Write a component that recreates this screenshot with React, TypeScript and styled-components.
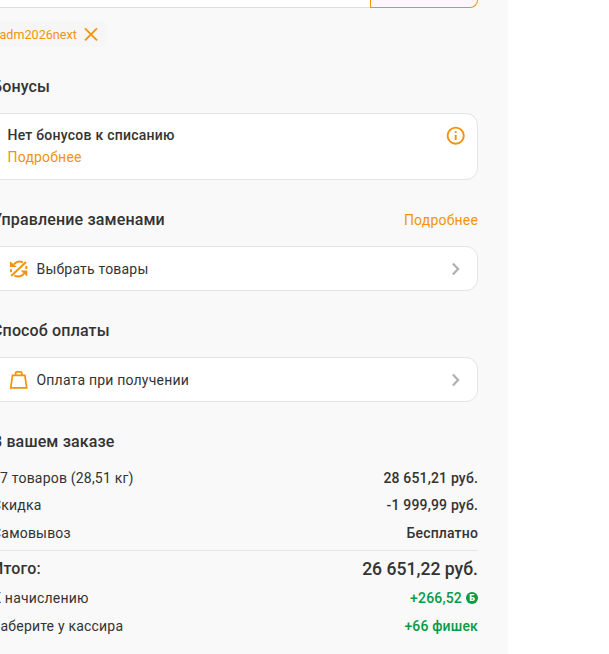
import React from "react";
import styled, { createGlobalStyle } from "styled-components";

const GlobalStyle = createGlobalStyle`
  * { box-sizing: border-box; }
  html, body { margin: 0; background: #fff; overflow: hidden; }
  body { font-family: Roboto, "Liberation Sans", sans-serif; font-size: 14px; color: #333; letter-spacing: 0.2px; }
`;

const orange = "#f2930d";
const line = "#e4e4e4";

const Viewport = styled.div`
  width: 609px;
  height: 654px;
  overflow: hidden;
`;

const Panel = styled.main`
  width: 516px;
  height: 654px;
  margin-left: -8px;
  padding-right: 30px;
  background: #f9f9f9;
`;

const PromoField = styled.div`
  display: flex;
  height: 8px;
`;

const PromoInput = styled.div`
  flex: 1;
  background: #fff;
  border-bottom: 1px solid #dedede;
`;

const PromoButton = styled.div`
  width: 108px;
  background: #faf8f9;
  border: 1.5px solid ${orange};
  border-top: 0;
  border-radius: 0 0 8px 0;
`;

const Chip = styled.div`
  display: flex;
  align-items: center;
  gap: 7px;
  width: 114px;
  height: 26px;
  margin-top: 13px;
  padding-left: 7.5px;
  background: #f6f6f6;
  border-radius: 6px;
  color: ${orange};
  font-size: 12.6px;
  letter-spacing: 0;
`;

const SectionHead = styled.div<{ $top: number }>`
  display: flex;
  justify-content: space-between;
  align-items: center;
  height: 24px;
  margin-top: ${(p) => p.$top}px;
`;

const Heading = styled.h2`
  margin: 0;
  font-size: 16px;
  line-height: 24px;
  font-weight: 500;
  letter-spacing: 0.15px;
`;

const Link = styled.span`
  color: ${orange};
  line-height: 22px;
`;

const Card = styled.div<{ $tall?: boolean }>`
  display: flex;
  align-items: ${(p) => (p.$tall ? "flex-start" : "center")};
  height: ${(p) => (p.$tall ? 67 : 45)}px;
  margin-top: 14px;
  padding: ${(p) => (p.$tall ? "10px 11px 0 14.5px" : "0 11.5px 0 15px")};
  background: #fff;
  border: 1px solid ${line};
  border-radius: 8px 12px 12px 8px;
`;

const BonusText = styled.div`
  display: flex;
  flex: 1;
  flex-direction: column;
  line-height: 22px;
`;

const Strong = styled.span`
  font-weight: 500;
  letter-spacing: 0.24px;
`;

const OptionLabel = styled.span`
  flex: 1;
  margin-left: 6.5px;
`;

const Summary = styled.div`
  margin-top: 10px;
`;

const Row = styled.div<{ $height: number }>`
  display: flex;
  align-items: center;
  justify-content: space-between;
  height: ${(p) => p.$height}px;
`;

const Divider = styled.div`
  height: 1px;
  margin-top: 3px;
  margin-bottom: 3px;
  background: ${line};
`;

const Value = styled.span<{ $green?: boolean; $large?: boolean }>`
  display: flex;
  align-items: center;
  gap: 4px;
  font-weight: 500;
  font-size: ${(p) => (p.$large ? 17.6 : 14)}px;
  letter-spacing: ${(p) => (p.$large ? 0 : 0.17)}px;
  color: ${(p) => (p.$green ? "#069b45" : "#333")};
`;

const Coin = styled.span`
  width: 12px;
  height: 12px;
  border-radius: 50%;
  background: #069b45;
  color: #fff;
  font-size: 9px;
  line-height: 12px;
  font-weight: 900;
  text-align: center;
  letter-spacing: 0;
`;

const InfoSlot = styled.div`
  display: flex;
  padding-top: 1.5px;
`;

const CloseIcon = () => (
  <svg width="14" height="14" viewBox="0 0 14 14" fill="none" stroke={orange} strokeWidth="1.8">
    <path d="M1 1.4l12 12M13 1.4L1 13.4" />
  </svg>
);

const InfoIcon = () => (
  <svg width="20" height="20" viewBox="0 0 20 20" fill="none" stroke={orange} strokeWidth="1.9">
    <circle cx="9.7" cy="9.7" r="8.1" />
    <path d="M9.7 8.7v5.2M9.7 5.3v1.8" />
  </svg>
);

const SwapIcon = () => (
  <svg width="22" height="22" viewBox="0 0 22 22" fill="none" stroke={orange} strokeWidth="2">
    <path d="M3.2 18L18 4M6 6.2C8.5 3.5 12 3 15 4.4M16 15.6C13.5 18.6 9.5 19 6.4 17.6M3 11.2v3M18.3 8V11" />
    <path d="M2 3.2v5.8h6.8zM19.3 18.4v-5.8h-6.8z" fill={orange} stroke="none" />
  </svg>
);

const BagIcon = () => (
  <svg width="22" height="22" viewBox="0 0 22 22" fill="none" stroke={orange} strokeWidth="1.7">
    <path d="M4.5 6.4h12.4l1.8 12.4H2.7zM7.6 6.4V4q0-1.2 1.2-1.2h3.8q1.2 0 1.2 1.2v2.4" />
  </svg>
);

const Chevron = () => (
  <svg width="20" height="20" viewBox="0 0 20 20" fill="none" stroke="#b0b0b0" strokeWidth="2.2">
    <path d="M6.9 4.6L12.1 10l-5.2 5.4" />
  </svg>
);

export default function App() {
  return (
    <Viewport>
      <GlobalStyle />
      <Panel>
        <PromoField>
          <PromoInput />
          <PromoButton />
        </PromoField>
        <Chip>
          <span>adm2026next</span>
          <CloseIcon />
        </Chip>

        <SectionHead $top={28}>
          <Heading>Бонусы</Heading>
        </SectionHead>
        <Card $tall>
          <BonusText>
            <Strong>Нет бонусов к списанию</Strong>
            <Link>Подробнее</Link>
          </BonusText>
          <InfoSlot>
            <InfoIcon />
          </InfoSlot>
        </Card>

        <SectionHead $top={28}>
          <Heading>Управление заменами</Heading>
          <Link>Подробнее</Link>
        </SectionHead>
        <Card>
          <SwapIcon />
          <OptionLabel>Выбрать товары</OptionLabel>
          <Chevron />
        </Card>

        <SectionHead $top={28}>
          <Heading>Способ оплаты</Heading>
        </SectionHead>
        <Card>
          <BagIcon />
          <OptionLabel>Оплата при получении</OptionLabel>
          <Chevron />
        </Card>

        <SectionHead $top={28}>
          <Heading>В вашем заказе</Heading>
        </SectionHead>
        <Summary>
          <Row $height={28}>
            <span>17 товаров (28,51 кг)</span>
            <Value>28 651,21 руб.</Value>
          </Row>
          <Row $height={26}>
            <span>Скидка</span>
            <Value>-1 999,99 руб.</Value>
          </Row>
          <Row $height={29}>
            <span>Самовывоз</span>
            <Value>Бесплатно</Value>
          </Row>
          <Divider />
          <Row $height={30}>
            <Heading>Итого:</Heading>
            <Value $large>26 651,22 руб.</Value>
          </Row>
          <Row $height={28}>
            <span>К начислению</span>
            <Value $green>
              +266,52 <Coin>Б</Coin>
            </Value>
          </Row>
          <Row $height={28}>
            <span>Заберите у кассира</span>
            <Value $green>+66 фишек</Value>
          </Row>
        </Summary>
      </Panel>
    </Viewport>
  );
}
